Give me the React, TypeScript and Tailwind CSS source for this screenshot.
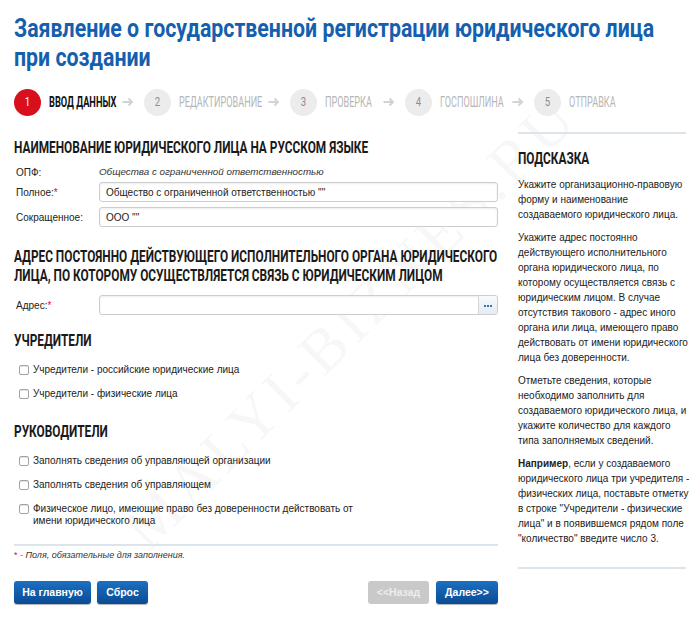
import React from "react";

const roboto = { fontFamily: 'Roboto, "Liberation Sans", sans-serif' };

const steps = [
  { n: "1", label: "ВВОД ДАННЫХ", w: "w-[65px]", active: true },
  { n: "2", label: "РЕДАКТИРОВАНИЕ", w: "w-[81px]" },
  { n: "3", label: "ПРОВЕРКА", w: "w-[50px]" },
  { n: "4", label: "ГОСПОШЛИНА", w: "w-[64px]" },
  { n: "5", label: "ОТПРАВКА", w: "w-[46px]" },
];

const hints: React.ReactNode[][] = [
  ["Укажите организационно-правовую", "форму и наименование", "создаваемого юридического лица."],
  [
    "Укажите адрес постоянно",
    "действующего исполнительного",
    "органа юридического лица, по",
    "которому осуществляется связь с",
    "юридическим лицом. В случае",
    "отсутствия такового - адрес иного",
    "органа или лица, имеющего право",
    "действовать от имени юридического",
    "лица без доверенности.",
  ],
  [
    "Отметьте сведения, которые",
    "необходимо заполнить для",
    "создаваемого юридического лица, и",
    "укажите количество для каждого",
    "типа заполняемых сведений.",
  ],
  [
    <>
      <b>Например</b>, если у создаваемого
    </>,
    "юридического лица три учредителя -",
    "физических лица, поставьте отметку",
    'в строке "Учредители - физические',
    'лица" и в появившемся рядом поле',
    '"количество" введите число 3.',
  ],
];

function Arrow() {
  return (
    <svg width="12" height="10" viewBox="0 0 12 10" className="mx-[8px] shrink-0">
      <path d="M0.5 5h9.5M6.5 1.5l3.5 3.5-3.5 3.5" fill="none" stroke="#d3d3d3" strokeWidth="2" />
    </svg>
  );
}

function Heading({ lines }: { lines: string[] }) {
  return (
    <h2 className="text-[16px] font-bold leading-[19px] text-[#1a1a1a]" style={roboto}>
      {lines.map((l) => (
        <span key={l} className="block w-max origin-left scale-x-[0.74] whitespace-nowrap">
          {l}
        </span>
      ))}
    </h2>
  );
}

function Check({ lines }: { lines: string[] }) {
  return (
    <label className="flex items-start gap-[4px] pl-[5px] text-[10px] leading-[12px] text-[#222]">
      <span className="mt-[1px] h-[10px] w-[10px] shrink-0 rounded-[2px] border border-[#a5a5a5] bg-white shadow-[inset_0_1px_1px_rgba(0,0,0,0.12)]" />
      <span>
        {lines.map((l) => (
          <span key={l} className="block">
            {l}
          </span>
        ))}
      </span>
    </label>
  );
}

function Input({ value, more }: { value?: string; more?: boolean }) {
  return (
    <div className="flex h-[20px] flex-1 items-center rounded-[3px] border border-[#cdcdcd] bg-white shadow-[inset_0_1px_2px_rgba(0,0,0,0.08)]">
      <span className="flex-1 pl-[6px] text-[10px] text-[#222]">{value}</span>
      {more && (
        <span className="flex h-full w-[19px] items-center justify-center gap-[1px] rounded-r-[3px] border-l border-[#d5d5d5] bg-gradient-to-b from-[#f8fafc] to-[#e4ebf2] pt-[2px]">
          <span className="h-[2px] w-[2px] bg-[#3a72b8]" />
          <span className="h-[2px] w-[2px] bg-[#3a72b8]" />
          <span className="h-[2px] w-[2px] bg-[#3a72b8]" />
        </span>
      )}
    </div>
  );
}

function Btn({ children, w, disabled }: { children: React.ReactNode; w: string; disabled?: boolean }) {
  return (
    <button
      className={
        disabled
          ? `h-[23px] ${w} rounded-[3px] bg-[#c9c9c9] text-[10.5px] font-bold text-[#ededed]`
          : `h-[23px] ${w} rounded-[3px] bg-gradient-to-b from-[#1c70c2] to-[#0a4b94] text-[10.5px] font-bold text-white shadow-[0_1px_1px_rgba(0,0,0,0.3)]`
      }
    >
      {children}
    </button>
  );
}

export default function App() {
  return (
    <div className="relative h-[620px] w-[700px] overflow-hidden bg-white" style={{ fontFamily: '"Liberation Sans", Arial, sans-serif' }}>
      {/* watermark */}
      <div
        className="pointer-events-none absolute left-[-30px] top-[285px] w-[760px] -rotate-45 text-center text-[62px] leading-[74px] tracking-[5px] text-black/[0.03]"
        style={{ fontFamily: '"Liberation Serif", serif' }}
      >
        MALYI-BIZNES.RU
      </div>

      <div className="relative px-[14px] pt-[14px]">
        <h1 className="text-[26px] font-bold leading-[29px] text-[#1560ae]" style={roboto}>
          <span className="block w-max origin-left scale-x-[0.82] whitespace-nowrap">Заявление о государственной регистрации юридического лица</span>
          <span className="block w-max origin-left scale-x-[0.82] whitespace-nowrap">при создании</span>
        </h1>

        {/* steps */}
        <div className="mt-[17px] flex h-[26px] items-center">
          {steps.map((s, i) => (
            <React.Fragment key={s.n}>
              {i > 0 && <Arrow />}
              <span
                className={
                  s.active
                    ? "flex h-[27px] w-[27px] shrink-0 items-center justify-center rounded-full bg-[#d8101c] text-[12px] text-white"
                    : "ml-[2px] flex h-[27px] w-[27px] shrink-0 items-center justify-center rounded-full bg-[#ececec] text-[12px] text-[#8c8c8c]"
                }
                style={roboto}
              >
                <span className="scale-x-[0.8]">{s.n}</span>
              </span>
              <span className={`ml-[8px] ${s.w} shrink-0`}>
                <span
                  className={
                    s.active
                      ? "block w-max origin-left scale-x-[0.66] whitespace-nowrap text-[14px] font-bold text-[#111]"
                      : "block w-max origin-left scale-x-[0.65] whitespace-nowrap text-[14px] text-[#b6b6b6]"
                  }
                  style={roboto}
                >
                  {s.label}
                </span>
              </span>
            </React.Fragment>
          ))}
        </div>

        <div className="mt-[17px] flex gap-[20px]">
          {/* form */}
          <div className="w-[484px] shrink-0 pt-[6px]">
            <Heading lines={["НАИМЕНОВАНИЕ ЮРИДИЧЕСКОГО ЛИЦА НА РУССКОМ ЯЗЫКЕ"]} />
            <div className="mt-[5px] text-[10px] text-[#222]">
              <div className="flex h-[20px] items-center">
                <span className="w-[85px] shrink-0 pl-[2px]">ОПФ:</span>
                <span className="text-[9.8px] italic text-[#333]">Общества с ограниченной ответственностью</span>
              </div>
              <div className="flex items-center">
                <span className="w-[85px] shrink-0 pl-[2px]">
                  Полное:<span className="text-[#d0101b]">*</span>
                </span>
                <Input value="Общество с ограниченной ответственностью &quot;&quot;" />
              </div>
              <div className="mt-[5px] flex items-center">
                <span className="w-[85px] shrink-0 pl-[2px]">Сокращенное:</span>
                <Input value="ООО &quot;&quot;" />
              </div>
            </div>

            <div className="mt-[20px]">
              <Heading
                lines={[
                  "АДРЕС ПОСТОЯННО ДЕЙСТВУЮЩЕГО ИСПОЛНИТЕЛЬНОГО ОРГАНА ЮРИДИЧЕСКОГО",
                  "ЛИЦА, ПО КОТОРОМУ ОСУЩЕСТВЛЯЕТСЯ СВЯЗЬ С ЮРИДИЧЕСКИМ ЛИЦОМ",
                ]}
              />
            </div>
            <div className="mt-[10px] flex items-center text-[10px] text-[#222]">
              <span className="w-[85px] shrink-0 pl-[2px]">
                Адрес:<span className="text-[#d0101b]">*</span>
              </span>
              <Input more />
            </div>

            <div className="mt-[16px]">
              <Heading lines={["УЧРЕДИТЕЛИ"]} />
            </div>
            <div className="mt-[14px] flex flex-col gap-[12px]">
              <Check lines={["Учредители - российские юридические лица"]} />
              <Check lines={["Учредители - физические лица"]} />
            </div>

            <div className="mt-[22px]">
              <Heading lines={["РУКОВОДИТЕЛИ"]} />
            </div>
            <div className="mt-[14px] flex flex-col gap-[12px]">
              <Check lines={["Заполнять сведения об управляющей организации"]} />
              <Check lines={["Заполнять сведения об управляющем"]} />
              <Check lines={["Физическое лицо, имеющие право без доверенности действовать от", "имени юридического лица"]} />
            </div>

            <div className="mt-[17px] h-[2px] bg-[#dde5ec]" />
            <p className="mt-[3px] text-[9px] leading-[12px] italic text-[#333]">
              <span className="not-italic text-[#d0101b]">*</span> - Поля, обязательные для заполнения.
            </p>

            <div className="mt-[20px] flex items-center">
              <div className="flex gap-[6px]">
                <Btn w="w-[77px]">На главную</Btn>
                <Btn w="w-[51px]">Сброс</Btn>
              </div>
              <div className="ml-auto flex gap-[7px]">
                <Btn w="w-[61px]" disabled>
                  &lt;&lt;Назад
                </Btn>
                <Btn w="w-[62px]">Далее&gt;&gt;</Btn>
              </div>
            </div>
          </div>

          {/* hint */}
          <div className="w-[168px] shrink-0">
            <div className="h-[2px] bg-[#dde5ec]" />
            <div className="mt-[15px]">
              <Heading lines={["ПОДСКАЗКА"]} />
            </div>
            <div className="mt-[9px] flex flex-col gap-[8px] text-[10px] leading-[15px] text-[#222]">
              {hints.map((p, i) => (
                <p key={i}>
                  {p.map((l, j) => (
                    <span key={j} className="block whitespace-nowrap">
                      {l}
                    </span>
                  ))}
                </p>
              ))}
            </div>
            <div className="mt-[21px] h-[2px] bg-[#dde5ec]" />
          </div>
        </div>
      </div>
    </div>
  );
}
